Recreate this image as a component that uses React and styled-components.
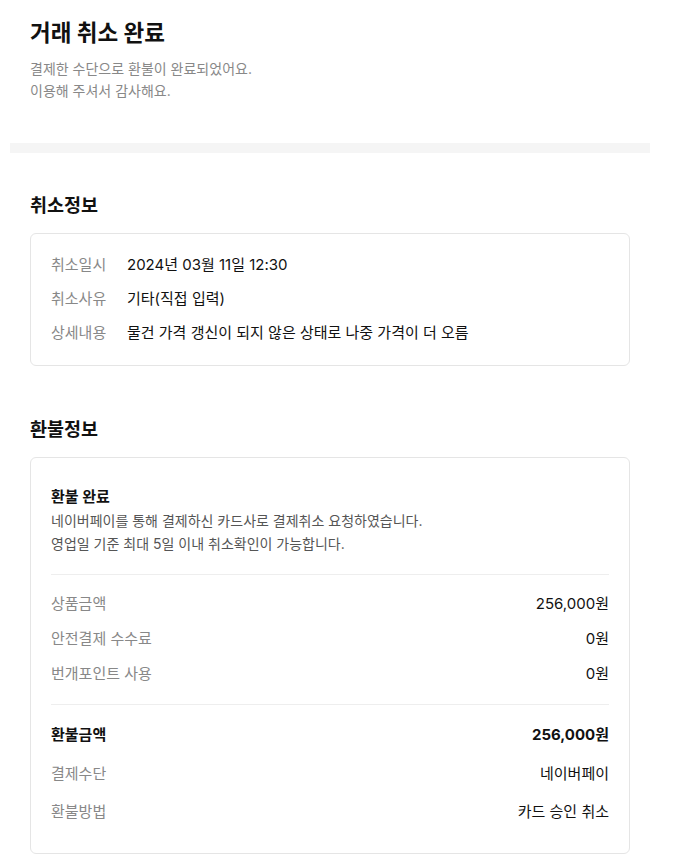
import styled, { createGlobalStyle } from 'styled-components'

const GlobalStyle = createGlobalStyle`
  * {
    box-sizing: border-box;
  }
  body {
    margin: 0;
    background: #fff;
    color: #222;
    font-family: Inter, "Noto Sans CJK KR", "Noto Sans", sans-serif;
  }
`

const Page = styled.main`
  width: 640px;
  margin-left: 10px;
  padding-bottom: 8px;
`

const Header = styled.header`
  padding: 18px 20px 41px;
`

const Title = styled.h1`
  margin: 0 0 10px;
  font-size: 22.5px;
  font-weight: 700;
  line-height: 30px;
  color: #111;
`

const Sub = styled.p`
  margin: 0;
  font-size: 14px;
  line-height: 22px;
  color: #888;
`

const Divider = styled.div`
  height: 10px;
  background: #f5f5f5;
`

const Section = styled.section`
  padding: 40px 20px 11px;
`

const SectionTitle = styled.h2`
  margin: 0 0 16px;
  font-size: 18.5px;
  font-weight: 700;
  line-height: 24px;
  color: #111;
`

const Card = styled.div`
  border: 1px solid #e5e5e5;
  border-radius: 6px;
  padding: ${(p) => p.$pad || '21px 20px 22px'};
`

const InfoRow = styled.div`
  display: flex;
  font-size: 15px;
  line-height: 20px;
  & + & {
    margin-top: 14px;
  }
`

const InfoLabel = styled.span`
  width: 76px;
  flex-shrink: 0;
  color: #888;
`

const InfoValue = styled.span`
  color: #111;
`

const Notice = styled.div`
  padding-bottom: 19px;
  border-bottom: 1px solid #eee;
`

const NoticeTitle = styled.h3`
  margin: 0 0 1px;
  font-size: 15px;
  font-weight: 700;
  line-height: 22px;
  color: #111;
`

const NoticeText = styled.p`
  margin: 0;
  font-size: 14px;
  line-height: 23px;
  color: #555;
`

const Group = styled.div`
  padding: ${(p) => (p.$last ? '20px 0 0' : '19px 0 20px')};
  border-bottom: ${(p) => (p.$last ? 'none' : '1px solid #eee')};
  display: flex;
  flex-direction: column;
  gap: ${(p) => p.$gap || '15px'};
`

const PriceRow = styled.div`
  display: flex;
  justify-content: space-between;
  font-size: 15px;
  line-height: 20px;
  color: ${(p) => (p.$strong ? '#111' : '#888')};
  font-weight: ${(p) => (p.$strong ? 700 : 400)};
`

const PriceValue = styled.span`
  color: #111;
`

const cancelInfo = [
  ['취소일시', '2024년 03월 11일 12:30'],
  ['취소사유', '기타(직접 입력)'],
  ['상세내용', '물건 가격 갱신이 되지 않은 상태로 나중 가격이 더 오름'],
]

export default function App() {
  return (
    <Page>
      <GlobalStyle />
      <Header>
        <Title>거래 취소 완료</Title>
        <Sub>결제한 수단으로 환불이 완료되었어요.</Sub>
        <Sub>이용해 주셔서 감사해요.</Sub>
      </Header>
      <Divider />

      <Section>
        <SectionTitle>취소정보</SectionTitle>
        <Card>
          {cancelInfo.map(([label, value]) => (
            <InfoRow key={label}>
              <InfoLabel>{label}</InfoLabel>
              <InfoValue>{value}</InfoValue>
            </InfoRow>
          ))}
        </Card>
      </Section>

      <Section>
        <SectionTitle>환불정보</SectionTitle>
        <Card $pad="28px 20px 31px">
          <Notice>
            <NoticeTitle>환불 완료</NoticeTitle>
            <NoticeText>네이버페이를 통해 결제하신 카드사로 결제취소 요청하였습니다.</NoticeText>
            <NoticeText>영업일 기준 최대 5일 이내 취소확인이 가능합니다.</NoticeText>
          </Notice>
          <Group>
            <PriceRow>
              <span>상품금액</span>
              <PriceValue>256,000원</PriceValue>
            </PriceRow>
            <PriceRow>
              <span>안전결제 수수료</span>
              <PriceValue>0원</PriceValue>
            </PriceRow>
            <PriceRow>
              <span>번개포인트 사용</span>
              <PriceValue>0원</PriceValue>
            </PriceRow>
          </Group>
          <Group $last $gap="18.5px">
            <PriceRow $strong>
              <span>환불금액</span>
              <PriceValue>256,000원</PriceValue>
            </PriceRow>
            <PriceRow>
              <span>결제수단</span>
              <PriceValue>네이버페이</PriceValue>
            </PriceRow>
            <PriceRow>
              <span>환불방법</span>
              <PriceValue>카드 승인 취소</PriceValue>
            </PriceRow>
          </Group>
        </Card>
      </Section>
    </Page>
  )
}
